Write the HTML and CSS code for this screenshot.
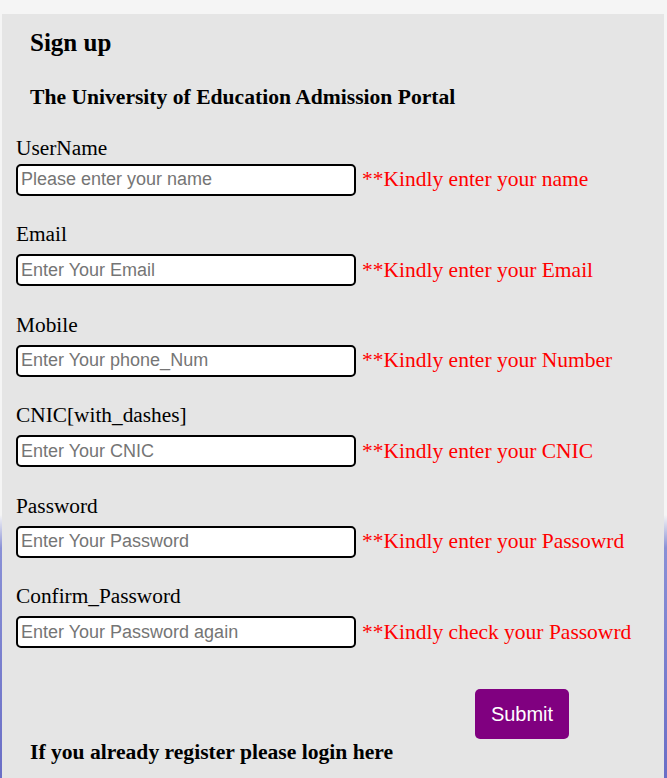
FILE: index.html
```html
<!DOCTYPE html>
<html>
<head>
<meta charset="utf-8">
<link rel="stylesheet" href="styles.css">
</head>
<body>
<div class="card">
  <h2 class="title">Sign up</h2>
  <h3 class="subtitle">The University of Education Admission Portal</h3>
  <form class="form">
    <div class="field">
      <label class="label">UserName</label>
      <div class="row"><input class="input" placeholder="Please enter your name"><span class="err">**Kindly enter your name</span></div>
    </div>
    <div class="field">
      <label class="label">Email</label>
      <div class="row"><input class="input" placeholder="Enter Your Email"><span class="err">**Kindly enter your Email</span></div>
    </div>
    <div class="field">
      <label class="label">Mobile</label>
      <div class="row"><input class="input" placeholder="Enter Your phone_Num"><span class="err">**Kindly enter your Number</span></div>
    </div>
    <div class="field">
      <label class="label">CNIC[with_dashes]</label>
      <div class="row"><input class="input" placeholder="Enter Your CNIC"><span class="err">**Kindly enter your CNIC</span></div>
    </div>
    <div class="field">
      <label class="label">Password</label>
      <div class="row"><input class="input" placeholder="Enter Your Password"><span class="err">**Kindly enter your Passowrd</span></div>
    </div>
    <div class="field">
      <label class="label">Confirm_Password</label>
      <div class="row"><input class="input" placeholder="Enter Your Password again"><span class="err">**Kindly check your Passowrd</span></div>
    </div>
    <button type="button" class="submit">Submit</button>
  </form>
  <h3 class="login">If you already register please login here</h3>
</div>
</body>
</html>
```

FILE: styles.css
```css
html, body {
  margin: 0;
  padding: 0;
}
body {
  min-height: 778px;
  padding-top: 14px;
  box-sizing: border-box;
  font-family: "Liberation Serif", "Times New Roman", serif;
  background: linear-gradient(to bottom, #f5f5f5 0, #f5f5f5 515px, #8990d6 548px, #6a6ec6 778px);
  overflow: hidden;
}
.card {
  margin: 0 3px 0 2px;
  background: #e5e5e5;
  padding: 15px 14px 20px 14px;
  color: #000;
}
.title {
  margin: 0 0 0 14px;
  font-size: 25px;
  font-weight: bold;
  line-height: 28.6px;
}
.subtitle {
  margin: 27px 0 0 14px;
  font-size: 21.6px;
  font-weight: bold;
  line-height: 24.5px;
}
.form {
  margin-top: 26.5px;
  display: flex;
  flex-direction: column;
}
.field {
  display: flex;
  flex-direction: column;
  margin-bottom: 26.5px;
}
.field:last-of-type {
  margin-bottom: 0;
}
.label {
  font-size: 21.33px;
  line-height: 24.5px;
  margin-bottom: 7.5px;
}
.field:first-child .label {
  margin-bottom: 3.5px;
}
.row {
  display: flex;
  align-items: center;
  gap: 6px;
}
.input {
  box-sizing: border-box;
  width: 340px;
  height: 32px;
  border: 2px solid #000;
  border-radius: 5px;
  background: #fff;
  padding: 0 3px;
  font-family: "Liberation Sans", Arial, sans-serif;
  font-size: 18px;
  outline: none;
}
.input::placeholder {
  color: #757575;
}
.err {
  color: #ff0000;
  font-size: 21.5px;
  line-height: 24.5px;
}
.submit {
  align-self: flex-start;
  margin: 41px 0 0 459px;
  width: 94px;
  height: 50px;
  border: none;
  border-radius: 5px;
  background: #800080;
  color: #fff;
  font-family: "Liberation Sans", Arial, sans-serif;
  font-size: 20px;
}
.login {
  margin: 1px 0 0 14px;
  font-size: 21.6px;
  font-weight: bold;
  line-height: 24.5px;
}
```
